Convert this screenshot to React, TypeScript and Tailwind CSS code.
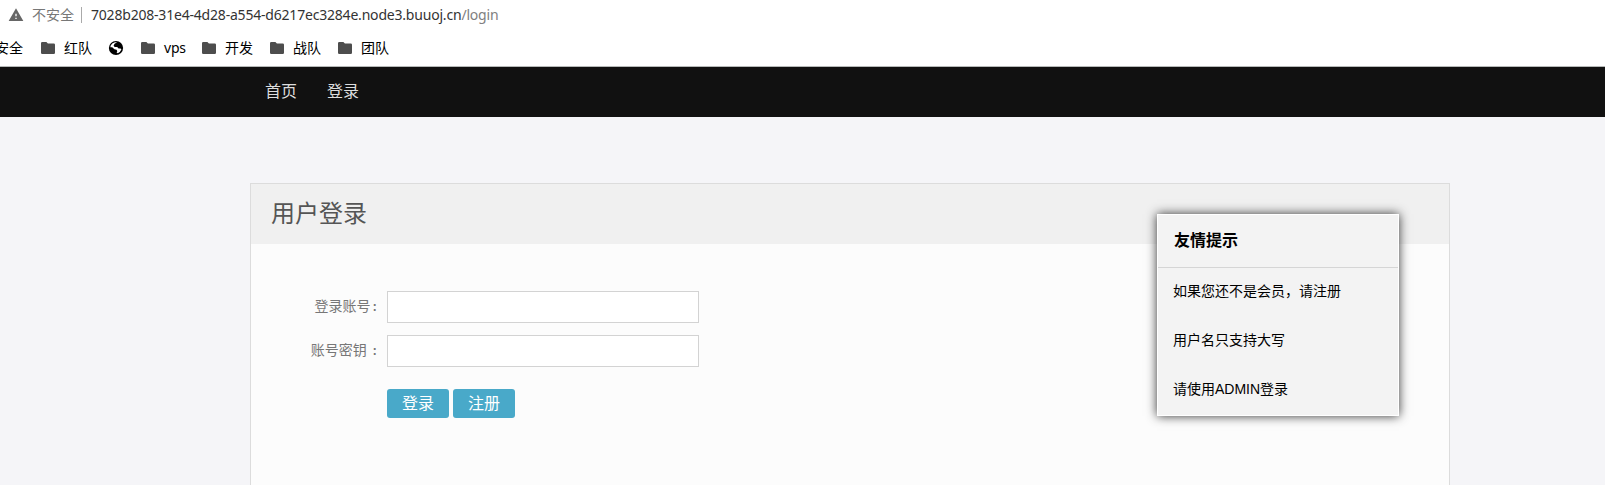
import { MdWarning } from "react-icons/md";

function Bookmark({ label, className }: { label: string; className: string }) {
  return (
    <div className={`flex shrink-0 items-center ${className}`}>
      <svg viewBox="0 0 14 12" className="h-3 w-3.5 shrink-0 fill-[#4d4d4d]">
        <path d="M1.2 0H5.4L6.9 1.6H12.8Q14 1.6 14 2.8V10.8Q14 12 12.8 12H1.2Q0 12 0 10.8V1.2Q0 0 1.2 0Z" />
      </svg>
      <span className="ml-[9px] whitespace-nowrap">{label}</span>
    </div>
  );
}

function Globe() {
  return (
    <svg viewBox="0 0 16 16" className="size-4 shrink-0">
      <circle cx="8" cy="8" r="7.1" fill="#000" />
      <path
        d="M9.2 2.4L6.8 3.6L5.6 5.6L6.6 6.9H9.2L10.6 8.4H12.6L13.4 9.6L11.8 11.9L9.8 13.2L8.6 12.6L9.3 11.2L8.6 9.8L6.4 9.2L4.2 7.3H2.3L2.8 5.2L4.6 3.2L7 2.2Z"
        fill="#fff"
      />
    </svg>
  );
}

function BrowserBar() {
  return (
    <header className="h-[67px] shrink-0 overflow-hidden border-b border-[#b6b9b8] bg-white text-[14px] leading-5">
      <div className="flex h-[30px] items-center pl-2">
        <MdWarning className="size-4 text-[#666]" />
        <span className="ml-2 w-[42px] text-[#777]">不安全</span>
        <span className="ml-[7px] h-4 w-px bg-[#aaa]" />
        <span className="ml-[9px] tracking-[-0.2px] text-[#333]">
          7028b208-31e4-4d28-a554-d6217ec3284e.node3.buuoj.cn<span className="text-[#808080]">/login</span>
        </span>
      </div>
      <div className="flex h-9 items-center text-black">
        <span className="-ml-[5px] w-[46px] shrink-0">安全</span>
        <Bookmark label="红队" className="w-[67px]" />
        <Globe />
        <Bookmark label="vps" className="ml-[17px] w-[61px] tracking-[-0.2px]" />
        <Bookmark label="开发" className="w-[68px]" />
        <Bookmark label="战队" className="w-[68px]" />
        <Bookmark label="团队" className="w-[67px]" />
      </div>
    </header>
  );
}

function Field({ label, type, name }: { label: string; type: string; name: string }) {
  return (
    <label className="flex h-8 items-center">
      <span className="w-32 pb-0.5 text-right text-[14px] leading-5 whitespace-pre text-[#777]">
        {label}
        <span className="font-['DejaVu_Sans_Mono',monospace]">:</span>
      </span>
      <input
        type={type}
        name={name}
        className="ml-2 h-8 w-[312px] border border-[#d3d3d3] bg-white px-2 outline-none"
      />
    </label>
  );
}

function Tips() {
  return (
    <aside className="absolute top-[30px] right-[50px] h-[202px] w-[242px] border border-white bg-[#f3f3f3] text-black shadow-[0_0_10px_#333]">
      <h2 className="flex h-[53px] items-center border-b border-[#d5d5d5] pl-4 text-[16px] font-bold">友情提示</h2>
      <ul className="text-[14px] leading-[47px]">
        <li className="h-[49px] pl-[15px]">如果您还不是会员，请注册</li>
        <li className="h-[49px] pl-[15px]">用户名只支持大写</li>
        <li className="h-[49px] pl-[15px]">请使用ADMIN登录</li>
      </ul>
    </aside>
  );
}

export default function App() {
  return (
    <div className="flex h-[485px] flex-col overflow-hidden bg-[#f5f5f8] font-['Noto_Sans','Noto_Sans_CJK_SC',sans-serif]">
      <BrowserBar />
      <nav className="flex h-[50px] shrink-0 items-center gap-[30px] bg-[#111] pl-[265px] pb-0.5 text-[16px] text-[#ddd]">
        <a>首页</a>
        <a>登录</a>
      </nav>
      <main className="relative mt-[66px] ml-[250px] h-[600px] w-[1200px] shrink-0 border border-[#dcdcdc] bg-[#fcfcfc] font-['Liberation_Sans','Noto_Sans_CJK_SC',sans-serif]">
        <h1 className="flex h-[60px] items-center bg-[#f0f0f0] pl-5 text-[24px] text-[#555]">用户登录</h1>
        <form className="flex flex-col gap-3 pt-[47px]">
          <Field label="登录账号" type="text" name="username" />
          <Field label="账号密钥 " type="password" name="password" />
          <div className="mt-2.5 ml-[136px] flex gap-1 text-[16px] text-white">
            <button type="button" className="h-[29px] w-[62px] rounded-[3px] bg-[#49a9c9] leading-[29px]">登录</button>
            <button type="button" className="h-[29px] w-[62px] rounded-[3px] bg-[#49a9c9] leading-[29px]">注册</button>
          </div>
        </form>
        <Tips />
      </main>
    </div>
  );
}
